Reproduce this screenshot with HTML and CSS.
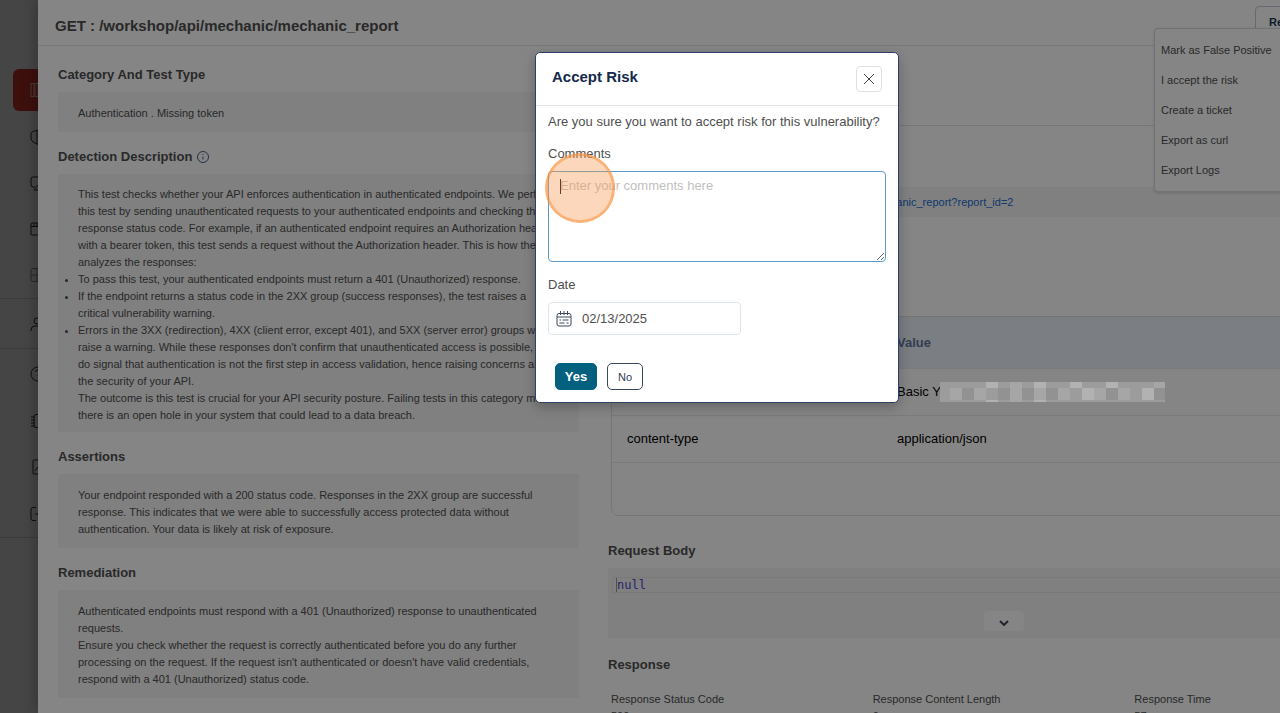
FILE: index.html
```html
<!DOCTYPE html>
<html lang="en">
<head>
    <meta charset="UTF-8">
    <meta name="viewport" content="width=device-width, initial-scale=1.0">
    <title>Accept Risk</title>
    <link rel="stylesheet" href="styles.css">
</head>
<body>

<div class="app">
    <nav class="sidebar" aria-label="Main">
        <a class="nav-item active" href="#" aria-label="Catalog">
            <svg viewBox="0 0 16 16"><rect x="1" y="1.500" width="3" height="13"/><rect x="5" y="1.500" width="3" height="13"/><rect x="9" y="1.500" width="5" height="13"/></svg>
        </a>
        <a class="nav-item" href="#" aria-label="Security">
            <svg viewBox="0 0 16 16"><path d="M8 1 3 2.500Q1 3 1 5v4q0 2 2 4l5 2.500 5-2.500q2-2 2-4V5q0-2-2-2.500zM7 1.500v13.500"/></svg>
        </a>
        <a class="nav-item" href="#" aria-label="Monitor">
            <svg viewBox="0 0 16 16"><path d="M5 12H3q-2 0-2-2V4q0-2 2-2h10q2 0 2 2v6q0 2-2 2h-2M4 15l4-5 4 5z"/></svg>
        </a>
        <a class="nav-item" href="#" aria-label="Applications">
            <svg viewBox="0 0 16 16"><rect x="1" y="2" width="14" height="12" rx="1"/><path d="M1 5.500h14M4 2v3M7 2v3"/></svg>
        </a>
        <a class="nav-item muted" href="#" aria-label="Dashboard">
            <svg viewBox="0 0 16 16"><rect x="1" y="1.500" width="14" height="13" rx="2"/><path d="M1 8h14M7 2v12"/></svg>
        </a>
        <a class="nav-item ruled" href="#" aria-label="Users">
            <svg viewBox="0 0 16 16"><circle cx="7" cy="5" r="3"/><path d="M1 15v-1q0-4 4-4h5q4 0 4 4v1"/></svg>
        </a>
        <a class="nav-item ruled" href="#" aria-label="Help">
            <svg viewBox="0 0 16 16"><circle cx="8" cy="8" r="7"/><path d="M5.500 6q0-2 2.500-2t2.500 2-2.500 3v1"/></svg>
        </a>
        <a class="nav-item" href="#" aria-label="Integrations">
            <svg viewBox="0 0 16 16"><path d="M4 3.500q0-2 2-2h7q2 0 2 2v9q0 2-2 2H6q-2 0-2-2zM1 4h4M1 7h4M1 10h4M1 13h4"/></svg>
        </a>
        <a class="nav-item" href="#" aria-label="Reports">
            <svg viewBox="0 0 16 16"><rect x="3" y="1" width="12" height="14" rx="1"/><path d="M5 12l3-4 3 4"/></svg>
        </a>
        <a class="nav-item" href="#" aria-label="Log out">
            <svg viewBox="0 0 16 16"><path d="M6 1.500H3q-2 0-2 2v9q0 2 2 2h3M5 8h9M11 5l3 3-3 3"/></svg>
        </a>
    </nav>
    <div class="backdrop"></div>

    <main class="drawer">
        <header class="drawer-header">
            <h1>GET : /workshop/api/mechanic/mechanic_report</h1>
            <div class="actions">
                <button class="resolve" type="button">Resolve Issue</button>
                <ul class="menu">
                    <li><a href="#">Mark as False Positive</a></li>
                    <li><a href="#">I accept the risk</a></li>
                    <li><a href="#">Create a ticket</a></li>
                    <li><a href="#">Export as curl</a></li>
                    <li><a href="#">Export Logs</a></li>
                </ul>
            </div>
        </header>

        <div class="columns">
            <div class="details">
                <h2>Category And Test Type</h2>
                <div class="box">Authentication . Missing token</div>

                <h2>Detection Description
                    <svg class="info" viewBox="0 0 12 12"><circle cx="6" cy="6" r="5.500"/><path d="M6 5.500v3M6 3v1"/></svg>
                </h2>
                <div class="box description">
                    <p>This test checks whether your API enforces authentication in authenticated endpoints. We perform this test by sending unauthenticated requests to your authenticated endpoints and checking the response status code. For example, if an authenticated endpoint requires an Authorization header with a bearer token, this test sends a request without the Authorization header. This is how the test analyzes the responses:</p>
                    <ul>
                        <li>To pass this test, your authenticated endpoints must return a 401 (Unauthorized) response.</li>
                        <li>If the endpoint returns a status code in the 2XX group (success responses), the test raises a critical vulnerability warning.</li>
                        <li>Errors in the 3XX (redirection), 4XX (client error, except 401), and 5XX (server error) groups will raise a warning. While these responses don't confirm that unauthenticated access is possible, they do signal that authentication is not the first step in access validation, hence raising concerns about the security of your API.</li>
                    </ul>
                    <p>The outcome is this test is crucial for your API security posture. Failing tests in this category mean there is an open hole in your system that could lead to a data breach.</p>
                </div>

                <h2>Assertions</h2>
                <div class="box">Your endpoint responded with a 200 status code. Responses in the 2XX group are successful response. This indicates that we were able to successfully access protected data without authentication. Your data is likely at risk of exposure.</div>

                <h2>Remediation</h2>
                <div class="box">
                    <p>Authenticated endpoints must respond with a 401 (Unauthorized) response to unauthenticated requests.</p>
                    <p>Ensure you check whether the request is correctly authenticated before you do any further processing on the request. If the request isn't authenticated or doesn't have valid credentials, respond with a 401 (Unauthorized) status code.</p>
                </div>
            </div>

            <div class="traffic">
                <div class="tabs"></div>
                <div class="url"><a href="#">http://crapi.apisec.ai:8888/workshop/api/mechanic/mechanic_report?report_id=2</a></div>

                <div class="table-wrap">
                    <table>
                        <thead>
                            <tr><th>Name</th><th>Value</th></tr>
                        </thead>
                        <tbody>
                            <tr><td>authorization</td><td>Basic Y</td></tr>
                            <tr><td>content-type</td><td>application/json</td></tr>
                        </tbody>
                    </table>
                </div>

                <h2>Request Body</h2>
                <div class="editor">
                    <code><span>null</span></code>
                    <button type="button" aria-label="Expand">
                        <svg viewBox="0 0 10 6"><path d="M1 1l4 4 4-4"/></svg>
                    </button>
                </div>

                <h2>Response</h2>
                <dl class="response">
                    <div><dt>Response Status Code</dt><dd>500</dd></div>
                    <div><dt>Response Content Length</dt><dd>0</dd></div>
                    <div><dt>Response Time</dt><dd>57</dd></div>
                </dl>
            </div>
        </div>
    </main>

    <div class="backdrop modal-layer">
        <form class="modal" role="dialog" aria-labelledby="modal-title">
            <div class="modal-header">
                <h2 id="modal-title">Accept Risk</h2>
                <button class="close" type="button" aria-label="Close">
                    <svg viewBox="0 0 10 10"><path d="M0 0l10 10M10 0L0 10"/></svg>
                </button>
            </div>
            <div class="modal-body">
                <p>Are you sure you want to accept risk for this vulnerability?</p>
                <label for="comments">Comments</label>
                <div class="comments">
                    <textarea id="comments" placeholder="Enter your comments here"></textarea>
                    <span class="caret"></span>
                    <span class="click-marker"></span>
                </div>
                <label for="date">Date</label>
                <div class="date">
                    <svg viewBox="0 0 16 16"><rect x="1" y="2.500" width="14" height="12.500" rx="2"/><path d="M1 6h14M4.500 0v4M8 0v4M11.500 0v4M3.500 9h1.500M6.500 9h6M3.500 12h5M10.500 12h2"/></svg>
                    <input id="date" type="text" value="02/13/2025">
                </div>
                <div class="buttons">
                    <button class="yes" type="button">Yes</button>
                    <button class="no" type="button">No</button>
                </div>
            </div>
        </form>
    </div>

    <!-- hides the credential in the first header row -->
    <svg class="redacted" viewBox="0 0 225 20" shape-rendering="crispEdges">
        <rect width="225" height="20" fill="#9c9c9c"/>
        <g fill="#a6a6a6">
            <rect x="10" y="6" width="12" height="12"/><rect x="34" y="6" width="12" height="12"/>
            <rect x="70" width="12" height="20"/><rect x="94" y="6" width="12" height="14"/>
            <rect x="118" y="6" width="12" height="12"/><rect x="154" y="6" width="12" height="12"/>
            <rect x="178" y="6" width="12" height="12"/><rect x="214" width="11" height="6"/>
        </g>
        <g fill="#929292">
            <rect x="22" y="6" width="12" height="12"/><rect x="58" y="6" width="12" height="12"/>
            <rect x="82" y="6" width="12" height="12"/><rect x="106" y="6" width="12" height="12"/>
            <rect x="166" y="6" width="12" height="12"/><rect x="214" y="6" width="11" height="12"/>
        </g>
        <g fill="#b2b2b2">
            <rect x="46" width="12" height="6"/><rect x="94" width="12" height="6"/>
            <rect x="130" width="12" height="6"/><rect x="142" y="6" width="12" height="12"/>
            <rect x="166" width="12" height="6"/><rect x="202" y="6" width="12" height="12"/>
            <rect x="46" y="18" width="12" height="2"/><rect x="94" y="18" width="12" height="2"/>
        </g>
    </svg>
</div>

</body>
</html>
```
FILE: styles.css
```css
* {
    box-sizing: border-box;
}

body {
    font-family: "Liberation Sans", Arial, sans-serif;
    font-size: 11px;
    line-height: 17px;
    color: #4f4f4f;
    margin: 0;
    overflow: hidden;
}

h1, h2, p, ul, dl, dd {
    margin: 0;
    padding: 0;
}

a {
    color: inherit;
    text-decoration: none;
}

button, input, textarea {
    font-family: inherit;
}

svg {
    fill: none;
    stroke: currentColor;
}

/* the app is wider than the window, the right part runs off screen */
.app {
    position: relative;
    width: calc(100% + 154px);
    height: 100vh;
    overflow: hidden;
    background-color: #fff;
}

.backdrop {
    position: absolute;
    inset: 0;
    background-color: rgba(0, 0, 0, 0.48);
}

/* sidebar */
.sidebar {
    width: 72px;
    padding-top: 66px;
    border-right: 1px solid #ddd;
    color: #333;
}

.nav-item {
    display: flex;
    align-items: center;
    height: 46px;
    padding-left: 30px;
}

.nav-item svg {
    width: 16px;
    height: 16px;
}

.nav-item.active {
    height: 42px;
    margin: 3px 0 3px 13px;
    padding-left: 17px;
    border-radius: 6px;
    background-color: #e03c2e;
    color: #ffd8d4;
}

.nav-item.muted {
    color: #8494ac;
}

.nav-item.ruled {
    height: 50px;
    border-top: 1px solid #d8d8d8;
}

.nav-item:last-child {
    height: 48px;
    border-bottom: 1px solid #d8d8d8;
}

/* drawer */
.drawer {
    position: absolute;
    inset: 0 0 0 38px;
    background-color: #fff;
    box-shadow: -4px 0 12px rgba(0, 0, 0, 0.2);
}

.drawer-header {
    display: flex;
    justify-content: space-between;
    height: 46px;
    padding: 6px 19px 0 17px;
    border-bottom: 1px solid #e4e6ea;
}

h1 {
    font-size: 15px;
    line-height: 40px;
}

.actions {
    position: relative;
    width: 160px;
}

.resolve {
    width: 120px;
    height: 32px;
    padding: 0 13px;
    border: 1px solid #c3cad6;
    border-radius: 4px;
    background-color: #fff;
    color: #1c3557;
    font-size: 11px;
    font-weight: bold;
    text-align: left;
}

.menu {
    position: absolute;
    top: 22px;
    left: -101px;
    width: 150px;
    padding: 6px;
    border: 1px solid #d8dade;
    border-radius: 4px;
    background-color: #fff;
    box-shadow: 0 1px 3px rgba(0, 0, 0, 0.15);
    line-height: 30px;
    list-style: none;
}

.columns {
    display: grid;
    grid-template-columns: 521fr 788fr;
    gap: 29px;
    padding: 19px 38px 0 20px;
}

.columns h2 {
    margin-bottom: 7px;
    font-size: 13px;
    line-height: 20px;
}

.info {
    width: 12px;
    height: 12px;
    margin-left: 1px;
    color: #4a5f8a;
    vertical-align: -2px;
}

.box {
    margin-bottom: 15px;
    padding: 13px 20px 10px;
    background-color: #f5f5f5;
}

.description {
    padding: 12px 20px 8px;
}

.tabs {
    height: 61px;
    margin-right: -38px;
    border-bottom: 1px solid #dde3ec;
}

.url {
    margin: 61px 0 99px;
    padding: 7px 15px 6px;
    background-color: #f5f5f5;
    color: #1f6fd1;
}

.table-wrap {
    height: 200px;
    margin: 0 0 25px 3px;
    border: 1px solid #dfe1e5;
    border-radius: 8px;
    overflow: hidden;
}

table {
    width: 100%;
    border-collapse: collapse;
    color: #000;
    font-size: 13px;
}

th, td {
    height: 47px;
    padding: 0 15px;
    border-bottom: 1px solid #e8eaee;
    text-align: left;
}

th {
    height: 51px;
    background-color: #ecf1fa;
    color: #64789b;
}

th:first-child {
    width: 270px;
}

.editor {
    height: 70px;
    margin-bottom: 17px;
    padding: 9px 0 0 4px;
    background-color: #f5f5f5;
    text-align: center;
}

.traffic .editor + h2 {
    margin-bottom: 16px;
}

.editor code {
    display: block;
    padding-left: 3px;
    border: 1px solid #e8e8e8;
    color: #4a48d0;
    font-family: "DejaVu Sans Mono", monospace;
    font-size: 12px;
    line-height: 14px;
    text-align: left;
}

.editor code span {
    border-left: 1px solid #999;
}

.editor button {
    width: 40px;
    height: 20px;
    margin-top: 18px;
    padding: 0;
    border: 0;
    border-radius: 4px;
    background-color: #fff;
    color: #445;
}

.editor button svg {
    width: 10px;
    height: 6px;
    stroke-width: 2;
}

.response {
    display: grid;
    grid-template-columns: repeat(3, 1fr);
    padding-left: 3px;
}

/* modal */
.modal-layer {
    display: flex;
    justify-content: center;
    align-items: flex-start;
    padding-top: 52px;
}

.modal {
    width: 364px;
    border: 1px solid #2f4068;
    border-radius: 5px;
    background-color: #fff;
    box-shadow: 0 4px 12px rgba(0, 0, 0, 0.25);
    font-size: 13px;
    line-height: 20px;
}

.modal-header {
    display: flex;
    justify-content: space-between;
    height: 53px;
    padding: 13px 16px 0;
    border-bottom: 1px solid #e2e4e8;
}

.modal-header h2 {
    color: #14294b;
    font-size: 15px;
    line-height: 22px;
}

.close {
    width: 26px;
    height: 26px;
    padding: 0;
    border: 1px solid #dfe0e3;
    border-radius: 4px;
    background-color: #fff;
    color: #444;
}

.close svg {
    display: block;
    width: 10px;
    height: 10px;
    margin: 0 auto;
}

.modal-body {
    padding: 6px 12px 12px;
}

.modal-body p {
    margin-bottom: 12px;
}

.modal-body label {
    display: block;
    margin-bottom: 7px;
}

.comments {
    position: relative;
    margin-bottom: 13px;
}

textarea {
    display: block;
    width: 338px;
    height: 91px;
    padding: 4px 11px;
    border: 1px solid #5a9bc9;
    border-radius: 4px;
    font-size: 13px;
    line-height: 20px;
    outline: none;
    resize: vertical;
}

textarea::placeholder {
    color: #bfbfbf;
}

.caret {
    position: absolute;
    top: 8px;
    left: 12px;
    width: 1px;
    height: 15px;
    background-color: #000;
}

/* ring around the last click */
.click-marker {
    position: absolute;
    top: -18px;
    left: -3px;
    width: 70px;
    height: 70px;
    border: 3px solid rgba(250, 145, 60, 0.7);
    border-radius: 50%;
    background-color: rgba(250, 155, 85, 0.4);
    background-clip: padding-box;
}

.date {
    display: flex;
    align-items: center;
    gap: 10px;
    width: 193px;
    height: 33px;
    margin-bottom: 28px;
    padding: 0 7px;
    border: 1px solid #dfe5ee;
    border-radius: 4px;
    color: #3d4863;
}

.date svg {
    flex: none;
    width: 16px;
    height: 16px;
}

.date input {
    width: 100%;
    padding: 0;
    border: 0;
    color: #4f4f4f;
    font-size: 13px;
}

.buttons {
    display: flex;
    gap: 10px;
    padding-left: 7px;
}

.buttons button {
    height: 27px;
    padding: 0;
    border-radius: 5px;
}

.yes {
    width: 42px;
    border: 1px solid #04607f;
    background-color: #04607f;
    color: #fff;
    font-size: 13px;
    font-weight: bold;
}

.no {
    width: 36px;
    border: 1px solid #3a4763;
    background-color: #fff;
    color: #2f3c5a;
    font-size: 11px;
}

.redacted {
    position: absolute;
    top: 382px;
    left: 940px;
    width: 225px;
    height: 20px;
    stroke: none;
}
```
